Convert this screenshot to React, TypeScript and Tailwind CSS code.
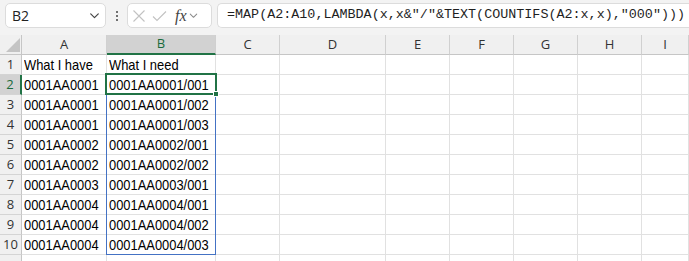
import React from 'react'

const COLS = ['A', 'B', 'C', 'D', 'E', 'F', 'G', 'H', 'I']
const WIDTHS = ['w-[85px]', 'w-[109px]', 'w-[64px]', 'w-[106px]', 'w-[64px]', 'w-[64px]', 'w-[64px]', 'w-[64px]', 'flex-1']

const DATA: [string, string][] = [
  ['What I have', 'What I need'],
  ['0001AA0001', '0001AA0001/001'],
  ['0001AA0001', '0001AA0001/002'],
  ['0001AA0001', '0001AA0001/003'],
  ['0001AA0002', '0001AA0002/001'],
  ['0001AA0002', '0001AA0002/002'],
  ['0001AA0003', '0001AA0003/001'],
  ['0001AA0004', '0001AA0004/001'],
  ['0001AA0004', '0001AA0004/002'],
  ['0001AA0004', '0001AA0004/003'],
]

const FORMULA = '=MAP(A2:A10,LAMBDA(x,x&"/"&TEXT(COUNTIFS(A2:x,x),"000")))'

const cellFont = "font-['Liberation_Sans',Arial,sans-serif]"
const uiFont = "font-['Open_Sans','Noto_Sans',sans-serif]"

const Chevron: React.FC<{ size?: number; color?: string }> = ({ size = 12, color = '#444' }) => (
  <svg width={size} height={size} viewBox="0 0 12 12" fill="none">
    <path d="M2.5 4.5 L6 8 L9.5 4.5" stroke={color} strokeWidth="1.1" strokeLinecap="round" strokeLinejoin="round" />
  </svg>
)

const Toolbar: React.FC = () => (
  <div className="h-[35px] bg-[#f3f3f3] flex items-start pt-[3px] pl-[5px]">
    {/* Name box */}
    <div className="w-[101px] h-[25px] bg-white border border-[#dcdcdc] rounded-[5px] flex items-center justify-between pl-[6px] pr-[4px]">
      <span className={`${uiFont} text-[14px] text-[#222]`}>B2</span>
      <Chevron size={13} />
    </div>
    {/* Dots */}
    <div className="w-[21px] h-[25px] flex flex-col items-center justify-center gap-[2px]">
      <div className="w-[2px] h-[2px] bg-[#444] rounded-full" />
      <div className="w-[2px] h-[2px] bg-[#444] rounded-full" />
      <div className="w-[2px] h-[2px] bg-[#444] rounded-full" />
    </div>
    {/* Cancel / enter / fx */}
    <div className="w-[85px] h-[25px] bg-white border border-[#dcdcdc] rounded-[5px] flex items-center pl-[4px] gap-[6px]">
      <svg width="14" height="14" viewBox="0 0 14 14" fill="none">
        <path d="M1.5 1.5 L12.5 12.5 M12.5 1.5 L1.5 12.5" stroke="#c2c2c2" strokeWidth="1.1" />
      </svg>
      <svg width="15" height="14" viewBox="0 0 15 14" fill="none">
        <path d="M1 7.5 L5 11.5 L14 2.5" stroke="#c2c2c2" strokeWidth="1.1" />
      </svg>
      <span className="font-['Liberation_Serif',serif] italic text-[16px] text-[#444] leading-none ml-[2px]">fx</span>
      <div className="-ml-[5px]">
        <Chevron size={11} color="#8a8a8a" />
      </div>
    </div>
    {/* Formula bar */}
    <div className="ml-[5px] flex-1 h-[25px] bg-white border border-r-0 border-[#dcdcdc] rounded-l-[5px] flex items-center pl-[9px] overflow-hidden">
      <span className="font-['Liberation_Mono',monospace] text-[13.4px] text-[#1f1f1f] whitespace-pre">{FORMULA}</span>
    </div>
  </div>
)

const HeaderRow: React.FC = () => (
  <div className="flex h-[20px]">
    <div className="w-[22px] bg-[#f0f0f0] border-r border-b border-[#c6c6c6] relative">
      <svg className="absolute left-[6px] top-[3px]" width="14" height="14" viewBox="0 0 14 14">
        <path d="M14 0 L14 14 L0 14 Z" fill="#c4c4c4" />
      </svg>
    </div>
    {COLS.map((c, i) => {
      const sel = c === 'B'
      return (
        <div
          key={c}
          className={`${WIDTHS[i]} shrink-0 flex items-center justify-center border-r border-[#d0d0d0] ${uiFont} text-[13px] ${
            sel ? 'bg-[#d2d2d2] text-[#1a6b3c] border-b-2 border-b-[#217346]' : 'bg-[#f0f0f0] text-[#333] border-b border-b-[#c6c6c6]'
          }`}
        >
          {c}
        </div>
      )
    })}
  </div>
)

const Row: React.FC<{ n: number; a?: string; b?: string; label?: boolean }> = ({ n, a = '', b = '', label = true }) => {
  const sel = n === 2
  return (
    <div className="flex h-[20px]">
      <div
        className={`w-[22px] shrink-0 flex items-center justify-center border-b border-[#d4d4d4] ${uiFont} text-[13px] ${
          sel ? 'bg-[#d2d2d2] text-[#1a6b3c] border-r-2 border-r-[#217346]' : 'bg-[#f0f0f0] text-[#333] border-r border-r-[#c6c6c6]'
        }`}
      >
        {label ? n : ''}
      </div>
      {COLS.map((c, i) => (
        <div
          key={c}
          className={`${WIDTHS[i]} shrink-0 border-r border-b border-[#e1e1e1] pl-[2px] flex items-end ${cellFont} text-[15px] leading-[19px] text-black whitespace-nowrap`}
        >
          <span className="inline-block scale-x-[0.86] origin-left">{i === 0 ? a : i === 1 ? b : ''}</span>
        </div>
      ))}
    </div>
  )
}

export default function App() {
  return (
    <div className="w-[689px] h-[261px] overflow-hidden bg-white">
      <Toolbar />
      <div className="relative">
        <HeaderRow />
        {DATA.map((r, i) => (
          <Row key={i} n={i + 1} a={r[0]} b={r[1]} />
        ))}
        <Row n={11} label={false} />
        {/* Spill range border B2:B10 */}
        <div className="absolute left-[106px] top-[39px] w-[110px] h-[181px] border border-[#4472c4] pointer-events-none" />
        {/* Active cell B2 */}
        <div className="absolute left-[105px] top-[38px] w-[112px] h-[22px] border-2 border-[#217346] pointer-events-none" />
        <div className="absolute left-[213px] top-[56px] w-[6px] h-[6px] bg-[#217346] border border-white pointer-events-none" />
      </div>
    </div>
  )
}
